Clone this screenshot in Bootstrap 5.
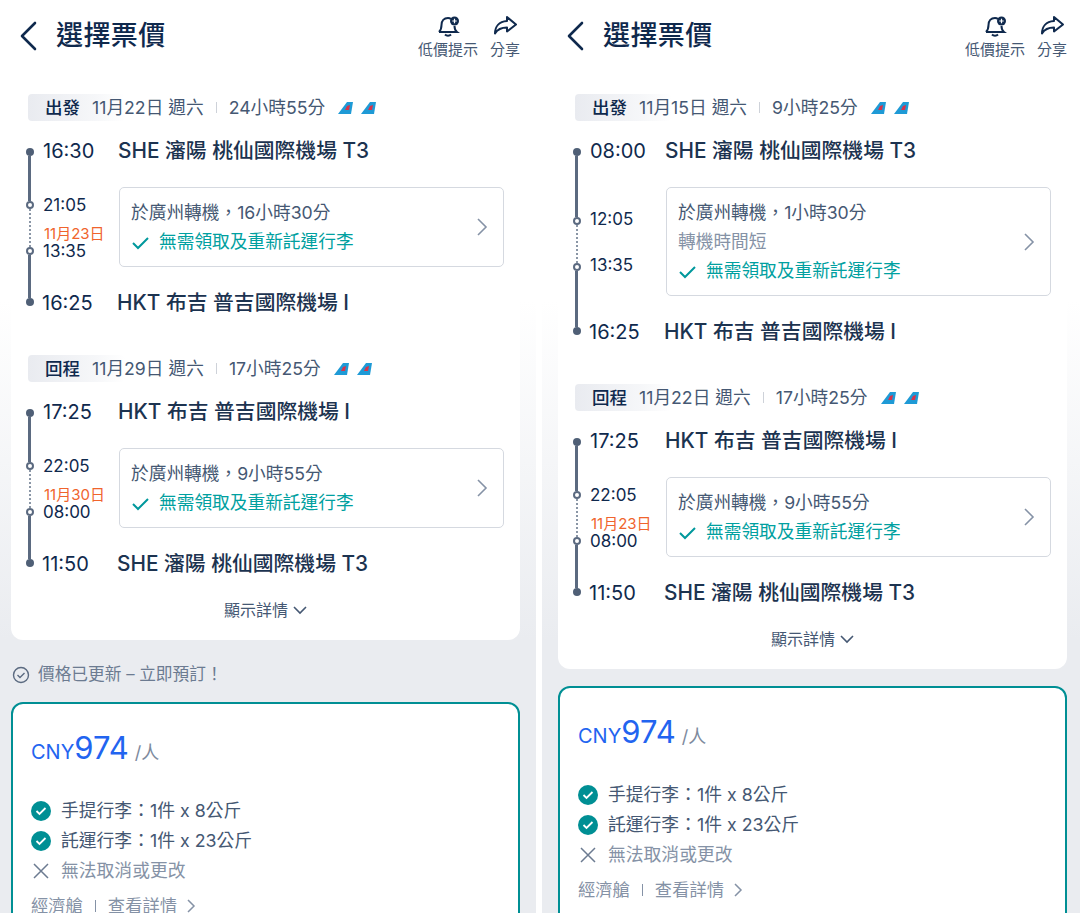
<!DOCTYPE html>
<html lang="zh-Hant">
<head>
    <meta charset="UTF-8">
    <meta name="viewport" content="width=device-width, initial-scale=1.0">
    <title>選擇票價</title>
    <link href="https://cdn.jsdelivr.net/npm/bootstrap@5.3.0/dist/css/bootstrap.min.css" rel="stylesheet">
    <style>
        html, body { height: 913px; overflow: hidden; }
        body {
            background: #fff;
            color: #0f294d;
            font-family: "Inter", "Noto Sans CJK TC", sans-serif;
        }
        .screens { height: 913px; gap: 6px; overflow: hidden; }
        .phone {
            flex: 0 0 auto;
            height: 913px;
            overflow: hidden;
            background: linear-gradient(#fff 0, #fff 300px, #eaecf0 640px);
        }
        .phone-left { width: 536px; padding: 0 16px 0 11px; }
        .phone-right { width: 538px; padding: 0 13px 0 16px; }

        .top-bar { height: 78px; }
        .back-wrap { padding-top: 18px; }
        .back-btn { width: 45px; padding-left: 9px; }
        .page-title { font-size: 27px; line-height: 36px; font-weight: 500; margin: 0; letter-spacing: .4px; }
        .top-act { font-size: 15px; line-height: 18px; color: #455873; text-align: center; }
        .top-act svg { display: block; margin: 0 auto 3px; }
        .top-acts { gap: 12px; padding-top: 14px; }

        .trip-card { background: #fff; border-radius: 12px; padding: 16px 16px 0 17px; }
        .trip-foot { height: 61px; font-size: 16px; color: #455873; }

        .leg-head { height: 27px; font-size: 17.7px; line-height: 27px; color: #455873; }
        .leg-tag {
            background: linear-gradient(90deg, #e9ebf0, #f6f7f9 70%, #fff);
            border-radius: 4px;
            width: 97px;
            height: 27px;
            padding-left: 17px;
            margin-right: -33px;
            font-weight: 500;
            color: #0f294d;
            font-size: 17.5px;
        }
        .leg-sep { width: 1px; height: 11px; background: #ced2d9; margin: 0 12px; }
        .fins { gap: 8px; margin-left: 13px; }

        .leg-grid {
            display: grid;
            grid-template-columns: 15px 75px 1fr;
            margin-top: 15px;
        }
        .leg-gap { margin-top: 37px; }
        .stop-time { font-size: 20px; line-height: 30px; font-weight: 400; color: #0f294d; }
        .stop-name { font-size: 20.8px; line-height: 30px; font-weight: 500; color: #1c3350; white-space: nowrap; }
        .stop-end .stop-time, .stop-end.stop-name { margin-left: -1px; }

        .rail { display: flex; flex-direction: column; align-items: center; width: 3px; }
        .rail-start { padding-top: 12px; }
        .rail-end { padding-bottom: 12px; }
        .rail-line { width: 3px; flex: 1 1 0; background: #5b6a80; }
        .rail-line-short { flex-grow: .92; }
        .rail-dot { width: 8px; height: 8px; border-radius: 50%; background: #4f5f76; flex: none; }
        .rail-open { width: 8px; height: 8px; border-radius: 50%; background: #fff; border: 2px solid #5b6a80; flex: none; }
        .rail-dots { height: 38px; border-left: 2px dotted #8a96a6; flex: none; }

        .mid-times { padding: 1px 0 0; }
        .mid-time { font-size: 17px; line-height: 24px; font-weight: 400; color: #0f294d; }
        .mid-gap { height: 22px; display: flex; align-items: flex-end; }
        .mid-date { font-size: 15px; line-height: 16px; color: #f0642d; margin: 0 0 -3px 1px; white-space: nowrap; }

        .transfer-wrap { padding: 21px 0; }
        .transfer-box {
            border: 1.5px solid #d5d9e0;
            border-radius: 5px;
            padding: 10px 14px 10px 11px;
            font-size: 17.7px;
            line-height: 29px;
            color: #455873;
            margin-left: 1px;
            width: 385px;
        }
        .transfer-note { color: #8592a6; }
        .transfer-ok { color: #00a0a0; }
        .transfer-ok svg { margin-right: 9px; }

        .price-note { height: 62px; font-size: 16.7px; color: #6c7b91; gap: 8px; padding: 8px 0 0 1px; }
        .fare-card {
            background: #fff;
            border: 2.5px solid #008f94;
            border-radius: 12px;
            padding: 21px 0 0 18px;
            height: 320px;
        }
        .fare-card-right { margin-top: 17px; }
        .fare-price { color: #2264f0; line-height: 46px; height: 46px; }
        .fare-cur { font-size: 20px; font-weight: 400; }
        .fare-num { font-size: 31px; font-weight: 400; }
        .fare-per { font-size: 18px; color: #7d8a9d; margin-left: 6px; }
        .fare-list { margin-top: 25px; font-size: 17.8px; }
        .fare-line { height: 30px; gap: 10px; color: #455873; }
        .fare-off { color: #8592a6; }
        .fare-more { font-size: 17.3px; color: #8592a6; margin-top: 5px; height: 30px; gap: 12px; }
        .fare-more svg { margin-left: -3px; }
        .fare-ico { width: 20px; height: 20px; flex: none; }
        .fare-bar { width: 1px; height: 12px; background: #8592a6; }
    </style>
</head>
<body>
    <div class="screens d-flex">

        <!-- left phone -->
        <div class="phone phone-left">
            <div class="top-bar d-flex justify-content-between align-items-start">
                <div class="back-wrap d-flex align-items-center">
                    <div class="back-btn"><svg width="18" height="32" viewBox="0 0 18 32" fill="none" stroke="#0f294d" stroke-width="2.6" stroke-linecap="round" stroke-linejoin="round"><path d="M15 3 2 16l13 13"/></svg></div>
                    <h1 class="page-title">選擇票價</h1>
                </div>
                <div class="top-acts d-flex">
                    <div class="top-act"><svg width="26" height="24" viewBox="0 0 26 24" fill="none" stroke="#0f294d" stroke-width="2"><path d="M4 18c2-2 2.500-4 2.500-7 0-4 2.500-7 6.500-7 1.200 0 2 .2 3 1"/><path d="M19.500 12c0 3 .5 4.500 2.500 6H4"/><path d="M10 20.500c1.500 1.500 4.500 1.500 6 0"/><circle cx="19.500" cy="7" r="4.500" fill="#0f294d" stroke="none"/><path d="M19.500 4.800v4.400M17.300 7h4.400" stroke="#fff" stroke-width="1.200"/></svg>低價提示</div>
                    <div class="top-act"><svg width="26" height="24" viewBox="0 0 26 24" fill="none" stroke="#0f294d" stroke-width="2" stroke-linejoin="round"><path d="M15 3l9 7.500-9 7v-4c-5 0-9 1-12 6 0-7 4-12 12-12.500z"/></svg>分享</div>
                </div>
            </div>

            <div class="trip-card">
                <div class="leg-head d-flex align-items-center">
                    <div class="leg-tag">出發</div>
                    <span>11月22日 週六</span><span class="leg-sep"></span><span>24小時55分</span>
                    <span class="fins d-flex"><svg width="15" height="13" viewBox="0 0 15 13"><path d="M0 13 9 1h6l-2 12z" fill="#1e9ad6"/><path d="M7 9 9 5l3-1-1 5z" fill="#d8334a"/></svg><svg width="15" height="13" viewBox="0 0 15 13"><path d="M0 13 9 1h6l-2 12z" fill="#1e9ad6"/><path d="M7 9 9 5l3-1-1 5z" fill="#d8334a"/></svg></span>
                </div>
                <div class="leg-grid">
                    <div class="rail rail-start"><span class="rail-dot"></span><span class="rail-line"></span></div>
                    <div class="stop-time">16:30</div>
                    <div class="stop-name">SHE 瀋陽 桃仙國際機場 T3</div>
                    <div class="rail"><span class="rail-line"></span><span class="rail-open"></span><span class="rail-dots"></span><span class="rail-open"></span><span class="rail-line rail-line-short"></span></div>
                    <div class="mid-times d-flex flex-column justify-content-center">
                        <div class="mid-time">21:05</div>
                        <div class="mid-gap"><span class="mid-date">11月23日</span></div>
                        <div class="mid-time">13:35</div>
                    </div>
                    <div class="transfer-wrap">
                        <div class="transfer-box d-flex justify-content-between align-items-center">
                            <div>
                                <div>於廣州轉機，16小時30分</div>
                                <div class="transfer-ok"><svg width="19" height="14" viewBox="0 0 19 14" fill="none" stroke="#00989c" stroke-width="2"><path d="M2 7l5 5L17 2"/></svg>無需領取及重新託運行李</div>
                            </div>
                            <svg width="14" height="20" viewBox="0 0 14 20" fill="none" stroke="#8592a6" stroke-width="1.600"><path d="M3 2l8 8-8 8"/></svg>
                        </div>
                    </div>
                    <div class="rail rail-end"><span class="rail-line"></span><span class="rail-dot"></span></div>
                    <div class="stop-end"><div class="stop-time">16:25</div></div>
                    <div class="stop-name stop-end">HKT 布吉 普吉國際機場 I</div>
                </div>

                <div class="leg-head d-flex align-items-center leg-gap">
                    <div class="leg-tag">回程</div>
                    <span>11月29日 週六</span><span class="leg-sep"></span><span>17小時25分</span>
                    <span class="fins d-flex"><svg width="15" height="13" viewBox="0 0 15 13"><path d="M0 13 9 1h6l-2 12z" fill="#1e9ad6"/><path d="M7 9 9 5l3-1-1 5z" fill="#d8334a"/></svg><svg width="15" height="13" viewBox="0 0 15 13"><path d="M0 13 9 1h6l-2 12z" fill="#1e9ad6"/><path d="M7 9 9 5l3-1-1 5z" fill="#d8334a"/></svg></span>
                </div>
                <div class="leg-grid">
                    <div class="rail rail-start"><span class="rail-dot"></span><span class="rail-line"></span></div>
                    <div class="stop-time">17:25</div>
                    <div class="stop-name">HKT 布吉 普吉國際機場 I</div>
                    <div class="rail"><span class="rail-line"></span><span class="rail-open"></span><span class="rail-dots"></span><span class="rail-open"></span><span class="rail-line rail-line-short"></span></div>
                    <div class="mid-times d-flex flex-column justify-content-center">
                        <div class="mid-time">22:05</div>
                        <div class="mid-gap"><span class="mid-date">11月30日</span></div>
                        <div class="mid-time">08:00</div>
                    </div>
                    <div class="transfer-wrap">
                        <div class="transfer-box d-flex justify-content-between align-items-center">
                            <div>
                                <div>於廣州轉機，9小時55分</div>
                                <div class="transfer-ok"><svg width="19" height="14" viewBox="0 0 19 14" fill="none" stroke="#00989c" stroke-width="2"><path d="M2 7l5 5L17 2"/></svg>無需領取及重新託運行李</div>
                            </div>
                            <svg width="14" height="20" viewBox="0 0 14 20" fill="none" stroke="#8592a6" stroke-width="1.600"><path d="M3 2l8 8-8 8"/></svg>
                        </div>
                    </div>
                    <div class="rail rail-end"><span class="rail-line"></span><span class="rail-dot"></span></div>
                    <div class="stop-end"><div class="stop-time">11:50</div></div>
                    <div class="stop-name stop-end">SHE 瀋陽 桃仙國際機場 T3</div>
                </div>
                <div class="trip-foot d-flex align-items-center justify-content-center gap-1">顯示詳情 <svg width="16" height="10" viewBox="0 0 16 10" fill="none" stroke="#455873" stroke-width="1.600"><path d="M2 2l6 6 6-6"/></svg></div>
            </div>

            <div class="price-note d-flex align-items-center">
                <svg width="18" height="18" viewBox="0 0 18 18" fill="none" stroke="#5b6a80" stroke-width="1.400"><circle cx="9" cy="9" r="7.500"/><path d="M5.500 9l2.500 2.500 4.500-4.500"/></svg>
                價格已更新 – 立即預訂！
            </div>

            <div class="fare-card">
                <div class="fare-price"><span class="fare-cur">CNY</span><span class="fare-num">974</span><span class="fare-per">/人</span></div>
                <div class="fare-list">
                    <div class="fare-line d-flex align-items-center"><svg class="fare-ico" viewBox="0 0 20 20"><circle cx="10" cy="10" r="10" fill="#008f94"/><path d="M5.500 10l3 3 6-6" fill="none" stroke="#fff" stroke-width="1.800"/></svg>手提行李：1件 x 8公斤</div>
                    <div class="fare-line d-flex align-items-center"><svg class="fare-ico" viewBox="0 0 20 20"><circle cx="10" cy="10" r="10" fill="#008f94"/><path d="M5.500 10l3 3 6-6" fill="none" stroke="#fff" stroke-width="1.800"/></svg>託運行李：1件 x 23公斤</div>
                    <div class="fare-line fare-off d-flex align-items-center"><svg class="fare-ico" viewBox="0 0 20 20" fill="none" stroke="#6c7b91" stroke-width="1.500"><path d="M3 3l14 14M17 3 3 17"/></svg>無法取消或更改</div>
                </div>
                <div class="fare-more d-flex align-items-center">經濟艙<span class="fare-bar"></span>查看詳情 <svg width="11" height="16" viewBox="0 0 11 16" fill="none" stroke="#8592a6" stroke-width="1.500"><path d="M2 2l6 6-6 6"/></svg></div>
            </div>
        </div>

        <!-- right phone -->
        <div class="phone phone-right">
            <div class="top-bar d-flex justify-content-between align-items-start">
                <div class="back-wrap d-flex align-items-center">
                    <div class="back-btn"><svg width="18" height="32" viewBox="0 0 18 32" fill="none" stroke="#0f294d" stroke-width="2.6" stroke-linecap="round" stroke-linejoin="round"><path d="M15 3 2 16l13 13"/></svg></div>
                    <h1 class="page-title">選擇票價</h1>
                </div>
                <div class="top-acts d-flex">
                    <div class="top-act"><svg width="26" height="24" viewBox="0 0 26 24" fill="none" stroke="#0f294d" stroke-width="2"><path d="M4 18c2-2 2.500-4 2.500-7 0-4 2.500-7 6.500-7 1.200 0 2 .2 3 1"/><path d="M19.500 12c0 3 .5 4.500 2.500 6H4"/><path d="M10 20.500c1.500 1.500 4.500 1.500 6 0"/><circle cx="19.500" cy="7" r="4.500" fill="#0f294d" stroke="none"/><path d="M19.500 4.800v4.400M17.300 7h4.400" stroke="#fff" stroke-width="1.200"/></svg>低價提示</div>
                    <div class="top-act"><svg width="26" height="24" viewBox="0 0 26 24" fill="none" stroke="#0f294d" stroke-width="2" stroke-linejoin="round"><path d="M15 3l9 7.500-9 7v-4c-5 0-9 1-12 6 0-7 4-12 12-12.500z"/></svg>分享</div>
                </div>
            </div>

            <div class="trip-card">
                <div class="leg-head d-flex align-items-center">
                    <div class="leg-tag">出發</div>
                    <span>11月15日 週六</span><span class="leg-sep"></span><span>9小時25分</span>
                    <span class="fins d-flex"><svg width="15" height="13" viewBox="0 0 15 13"><path d="M0 13 9 1h6l-2 12z" fill="#1e9ad6"/><path d="M7 9 9 5l3-1-1 5z" fill="#d8334a"/></svg><svg width="15" height="13" viewBox="0 0 15 13"><path d="M0 13 9 1h6l-2 12z" fill="#1e9ad6"/><path d="M7 9 9 5l3-1-1 5z" fill="#d8334a"/></svg></span>
                </div>
                <div class="leg-grid">
                    <div class="rail rail-start"><span class="rail-dot"></span><span class="rail-line"></span></div>
                    <div class="stop-time">08:00</div>
                    <div class="stop-name">SHE 瀋陽 桃仙國際機場 T3</div>
                    <div class="rail"><span class="rail-line"></span><span class="rail-open"></span><span class="rail-dots"></span><span class="rail-open"></span><span class="rail-line rail-line-short"></span></div>
                    <div class="mid-times d-flex flex-column justify-content-center">
                        <div class="mid-time">12:05</div>
                        <div class="mid-gap"></div>
                        <div class="mid-time">13:35</div>
                    </div>
                    <div class="transfer-wrap">
                        <div class="transfer-box d-flex justify-content-between align-items-center">
                            <div>
                                <div>於廣州轉機，1小時30分</div>
                                <div class="transfer-note">轉機時間短</div>
                                <div class="transfer-ok"><svg width="19" height="14" viewBox="0 0 19 14" fill="none" stroke="#00989c" stroke-width="2"><path d="M2 7l5 5L17 2"/></svg>無需領取及重新託運行李</div>
                            </div>
                            <svg width="14" height="20" viewBox="0 0 14 20" fill="none" stroke="#8592a6" stroke-width="1.600"><path d="M3 2l8 8-8 8"/></svg>
                        </div>
                    </div>
                    <div class="rail rail-end"><span class="rail-line"></span><span class="rail-dot"></span></div>
                    <div class="stop-end"><div class="stop-time">16:25</div></div>
                    <div class="stop-name stop-end">HKT 布吉 普吉國際機場 I</div>
                </div>

                <div class="leg-head d-flex align-items-center leg-gap">
                    <div class="leg-tag">回程</div>
                    <span>11月22日 週六</span><span class="leg-sep"></span><span>17小時25分</span>
                    <span class="fins d-flex"><svg width="15" height="13" viewBox="0 0 15 13"><path d="M0 13 9 1h6l-2 12z" fill="#1e9ad6"/><path d="M7 9 9 5l3-1-1 5z" fill="#d8334a"/></svg><svg width="15" height="13" viewBox="0 0 15 13"><path d="M0 13 9 1h6l-2 12z" fill="#1e9ad6"/><path d="M7 9 9 5l3-1-1 5z" fill="#d8334a"/></svg></span>
                </div>
                <div class="leg-grid">
                    <div class="rail rail-start"><span class="rail-dot"></span><span class="rail-line"></span></div>
                    <div class="stop-time">17:25</div>
                    <div class="stop-name">HKT 布吉 普吉國際機場 I</div>
                    <div class="rail"><span class="rail-line"></span><span class="rail-open"></span><span class="rail-dots"></span><span class="rail-open"></span><span class="rail-line rail-line-short"></span></div>
                    <div class="mid-times d-flex flex-column justify-content-center">
                        <div class="mid-time">22:05</div>
                        <div class="mid-gap"><span class="mid-date">11月23日</span></div>
                        <div class="mid-time">08:00</div>
                    </div>
                    <div class="transfer-wrap">
                        <div class="transfer-box d-flex justify-content-between align-items-center">
                            <div>
                                <div>於廣州轉機，9小時55分</div>
                                <div class="transfer-ok"><svg width="19" height="14" viewBox="0 0 19 14" fill="none" stroke="#00989c" stroke-width="2"><path d="M2 7l5 5L17 2"/></svg>無需領取及重新託運行李</div>
                            </div>
                            <svg width="14" height="20" viewBox="0 0 14 20" fill="none" stroke="#8592a6" stroke-width="1.600"><path d="M3 2l8 8-8 8"/></svg>
                        </div>
                    </div>
                    <div class="rail rail-end"><span class="rail-line"></span><span class="rail-dot"></span></div>
                    <div class="stop-end"><div class="stop-time">11:50</div></div>
                    <div class="stop-name stop-end">SHE 瀋陽 桃仙國際機場 T3</div>
                </div>
                <div class="trip-foot d-flex align-items-center justify-content-center gap-1">顯示詳情 <svg width="16" height="10" viewBox="0 0 16 10" fill="none" stroke="#455873" stroke-width="1.600"><path d="M2 2l6 6 6-6"/></svg></div>
            </div>

            <div class="fare-card fare-card-right">
                <div class="fare-price"><span class="fare-cur">CNY</span><span class="fare-num">974</span><span class="fare-per">/人</span></div>
                <div class="fare-list">
                    <div class="fare-line d-flex align-items-center"><svg class="fare-ico" viewBox="0 0 20 20"><circle cx="10" cy="10" r="10" fill="#008f94"/><path d="M5.500 10l3 3 6-6" fill="none" stroke="#fff" stroke-width="1.800"/></svg>手提行李：1件 x 8公斤</div>
                    <div class="fare-line d-flex align-items-center"><svg class="fare-ico" viewBox="0 0 20 20"><circle cx="10" cy="10" r="10" fill="#008f94"/><path d="M5.500 10l3 3 6-6" fill="none" stroke="#fff" stroke-width="1.800"/></svg>託運行李：1件 x 23公斤</div>
                    <div class="fare-line fare-off d-flex align-items-center"><svg class="fare-ico" viewBox="0 0 20 20" fill="none" stroke="#6c7b91" stroke-width="1.500"><path d="M3 3l14 14M17 3 3 17"/></svg>無法取消或更改</div>
                </div>
                <div class="fare-more d-flex align-items-center">經濟艙<span class="fare-bar"></span>查看詳情 <svg width="11" height="16" viewBox="0 0 11 16" fill="none" stroke="#8592a6" stroke-width="1.500"><path d="M2 2l6 6-6 6"/></svg></div>
            </div>
        </div>
    </div>
    <script src="https://cdn.jsdelivr.net/npm/bootstrap@5.3.0/dist/js/bootstrap.bundle.min.js"></script>
</body>
</html>
